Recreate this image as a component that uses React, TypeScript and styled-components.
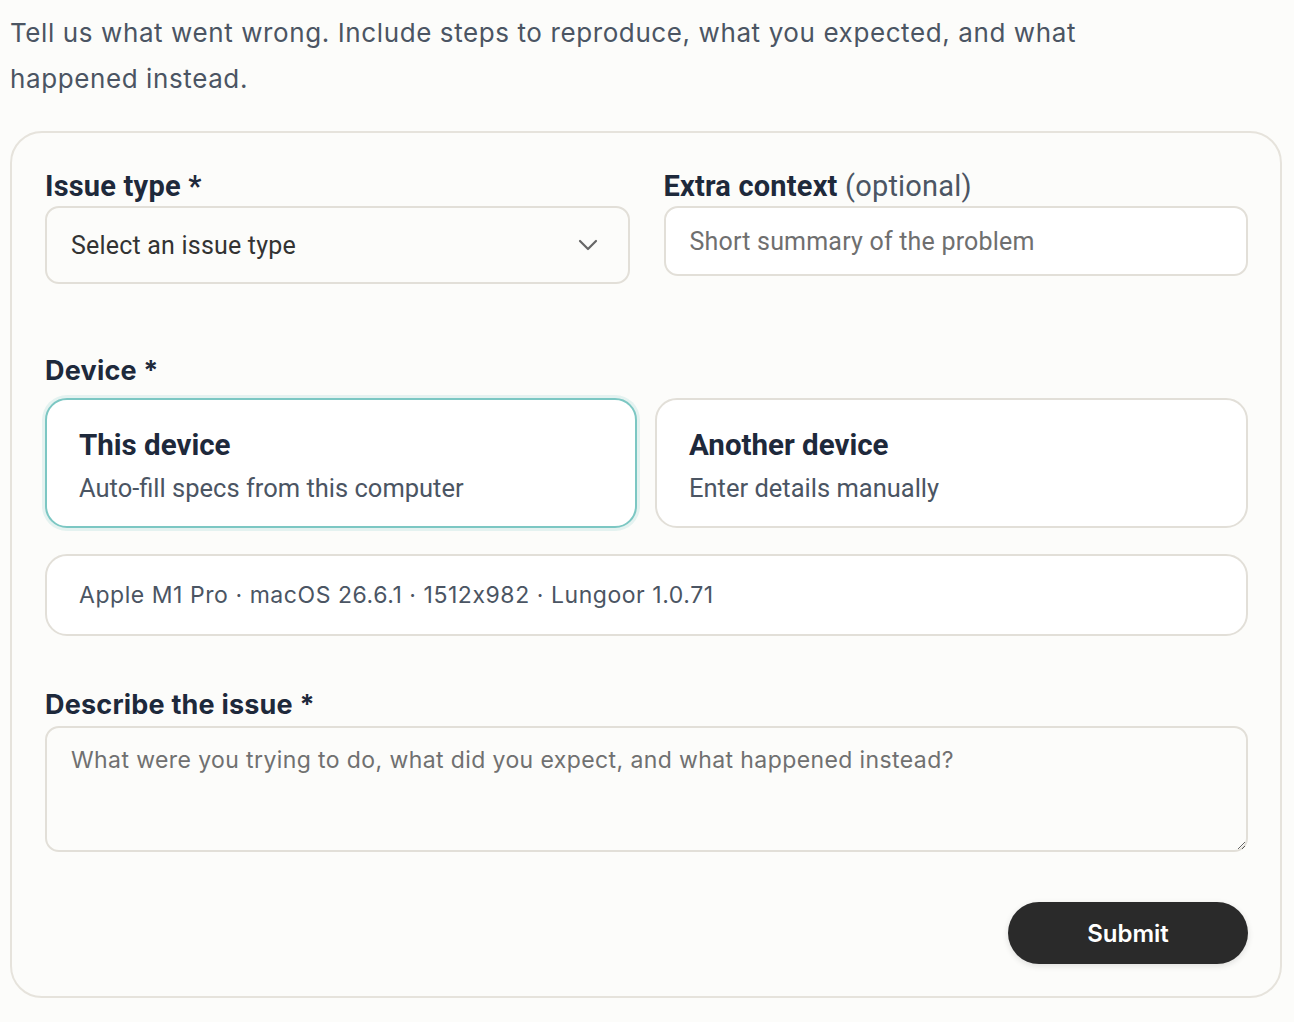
import React, { useState } from 'react';
import styled, { createGlobalStyle } from 'styled-components';

const GlobalStyle = createGlobalStyle`
  * { box-sizing: border-box; }
  body {
    margin: 0;
    background: #fcfcfa;
    font-family: Inter, "Noto Sans", sans-serif;
    font-feature-settings: "calt" 0;
  }
`;

const Page = styled.div`
  padding: 10px 12px 22px 10px;
`;

const Intro = styled.p`
  margin: 0 0 29px;
  max-width: 1090px;
  font-size: 26px;
  letter-spacing: 0.6px;
  line-height: 46px;
  color: #4b5563;
`;

const Card = styled.form`
  border: 2px solid #e6e3dc;
  border-radius: 32px;
  padding: 33px 32px 32px 33px;
  display: flex;
  flex-direction: column;
`;

const TopRow = styled.div`
  display: grid;
  grid-template-columns: 1fr 1fr;
  column-gap: 34px;
  margin-bottom: 67px;
`;

const Field = styled.div`
  display: flex;
  flex-direction: column;
`;

const Label = styled.label<{ $alt?: boolean }>`
  font-family: ${({ $alt }) => ($alt ? 'Roboto, "Noto Sans", sans-serif' : 'Inter, "Noto Sans", sans-serif')};
  font-size: ${({ $alt }) => ($alt ? '29px' : '27px')};
  letter-spacing: 0.2px;
  font-weight: 700;
  line-height: 40px;
  color: #1e293b;
`;

const Optional = styled.span`
  font-weight: 400;
  color: #4b5563;
`;

const SelectWrap = styled.div`
  position: relative;
`;

const Select = styled.select`
  width: 100%;
  height: 78px;
  appearance: none;
  padding: 0 60px 0 24px;
  border: 2px solid #e2dfd8;
  border-radius: 14px;
  background: #fcfcfa;
  font-family: Roboto, "Noto Sans", sans-serif;
  font-size: 25px;
  letter-spacing: 0.2px;
  color: #333333;
  outline: none;
`;

const Chevron = styled.svg`
  position: absolute;
  right: 32px;
  top: 50%;
  transform: translateY(-50%);
  pointer-events: none;
`;

const TextInput = styled.input`
  height: 70px;
  padding: 0 24px;
  border: 2px solid #e2dfd8;
  border-radius: 14px;
  background: #ffffff;
  font-family: Roboto, "Noto Sans", sans-serif;
  font-size: 25px;
  letter-spacing: 0.2px;
  color: #333333;
  outline: none;

  &::placeholder {
    color: #6f6f6f;
  }
`;

const DeviceRow = styled.div`
  display: grid;
  grid-template-columns: 592px 1fr;
  column-gap: 18px;
  margin-top: 7px;
`;

const DeviceOption = styled.button<{ $active: boolean }>`
  height: 130px;
  padding: 4px 32px 0;
  display: flex;
  flex-direction: column;
  justify-content: center;
  gap: 11px;
  text-align: left;
  background: #ffffff;
  border: 2px solid ${({ $active }) => ($active ? '#7cc7c3' : '#e2dfd8')};
  border-radius: 22px;
  box-shadow: ${({ $active }) => ($active ? '0 0 0 3px rgba(124, 199, 195, 0.18)' : 'none')};
  cursor: pointer;
  font-family: Roboto, "Noto Sans", sans-serif;
`;

const OptionTitle = styled.span`
  font-size: 29.5px;
  font-weight: 700;
  color: #1e293b;
  line-height: 34px;
`;

const OptionHint = styled.span`
  font-size: 25.5px;
  color: #4b5563;
  line-height: 30px;
`;

const Specs = styled.div`
  margin-top: 26px;
  height: 82px;
  padding: 0 32px;
  display: flex;
  align-items: center;
  background: #ffffff;
  border: 2px solid #e2dfd8;
  border-radius: 22px;
  font-size: 23px;
  letter-spacing: 0.55px;
  color: #4b5563;
`;

const DescribeField = styled(Field)`
  margin-top: 49px;
`;

const TextArea = styled.textarea`
  margin-top: 1px;
  height: 126px;
  padding: 17px 24px;
  border: 2px solid #e2dfd8;
  border-radius: 14px;
  background: #fcfcfa;
  font-family: Inter, "Noto Sans", sans-serif;
  font-feature-settings: "calt" 0;
  font-size: 23px;
  letter-spacing: 0.4px;
  line-height: 30px;
  color: #333333;
  outline: none;

  &::placeholder {
    color: #707070;
  }
`;

const Actions = styled.div`
  display: flex;
  justify-content: flex-end;
  margin-top: 50px;
`;

const SubmitButton = styled.button`
  width: 240px;
  height: 62px;
  border: none;
  border-radius: 999px;
  background: #2a2a2a;
  color: #ffffff;
  font-family: Inter, "Noto Sans", sans-serif;
  font-size: 24px;
  font-weight: 600;
  box-shadow: 0 2px 6px rgba(0, 0, 0, 0.12);
  cursor: pointer;
`;

const devices = [
  { id: 'this', title: 'This device', hint: 'Auto-fill specs from this computer' },
  { id: 'other', title: 'Another device', hint: 'Enter details manually' },
];

const App: React.FC = () => {
  const [device, setDevice] = useState('this');

  return (
    <Page>
      <GlobalStyle />
      <Intro>
        Tell us what went wrong. Include steps to reproduce, what you expected, and what happened instead.
      </Intro>
      <Card onSubmit={(e) => e.preventDefault()}>
        <TopRow>
          <Field>
            <Label $alt htmlFor="issue-type">Issue type *</Label>
            <SelectWrap>
              <Select id="issue-type" defaultValue="">
                <option value="" disabled>Select an issue type</option>
                <option value="bug">Bug</option>
                <option value="crash">Crash</option>
                <option value="performance">Performance</option>
              </Select>
              <Chevron width="20" height="12" viewBox="0 0 20 12" fill="none">
                <path d="M2 2l8 8 8-8" stroke="#666" strokeWidth="2.2" strokeLinecap="round" strokeLinejoin="round" />
              </Chevron>
            </SelectWrap>
          </Field>
          <Field>
            <Label $alt htmlFor="extra">Extra context <Optional>(optional)</Optional></Label>
            <TextInput id="extra" placeholder="Short summary of the problem" />
          </Field>
        </TopRow>

        <Field>
          <Label>Device *</Label>
          <DeviceRow>
            {devices.map((d) => (
              <DeviceOption
                key={d.id}
                type="button"
                $active={device === d.id}
                onClick={() => setDevice(d.id)}
              >
                <OptionTitle>{d.title}</OptionTitle>
                <OptionHint>{d.hint}</OptionHint>
              </DeviceOption>
            ))}
          </DeviceRow>
        </Field>

        <Specs>Apple M1 Pro · macOS 26.6.1 · 1512x982 · Lungoor 1.0.71</Specs>

        <DescribeField>
          <Label htmlFor="describe">Describe the issue *</Label>
          <TextArea
            id="describe"
            placeholder="What were you trying to do, what did you expect, and what happened instead?"
          />
        </DescribeField>

        <Actions>
          <SubmitButton type="submit">Submit</SubmitButton>
        </Actions>
      </Card>
    </Page>
  );
};

export default App;
